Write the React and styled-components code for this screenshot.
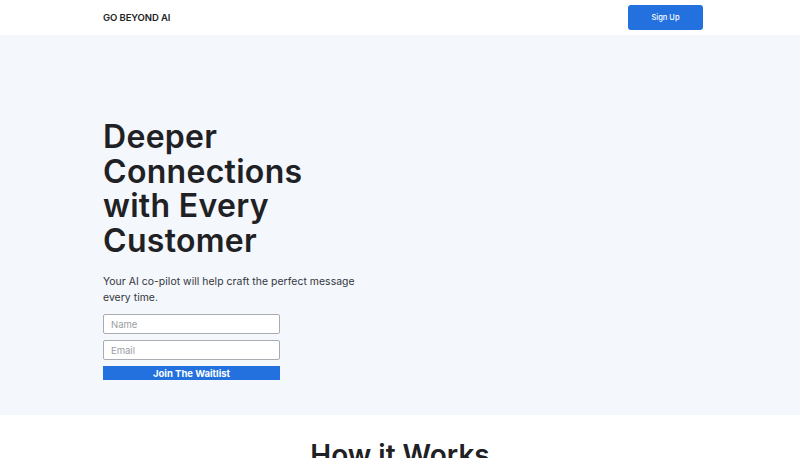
import React from 'react';
import styled, { createGlobalStyle } from 'styled-components';

const GlobalStyle = createGlobalStyle`
  * { box-sizing: border-box; }
  body {
    margin: 0;
    font-family: Inter, "Noto Sans", sans-serif;
    color: #1f2023;
    background: #fff;
  }
`;

const Container = styled.div`
  width: 600px;
  margin-left: calc(50% - 297px);
`;

const Header = styled.header`
  height: 35px;
  background: #fff;
`;

const HeaderInner = styled(Container)`
  height: 100%;
  display: flex;
  align-items: center;
  justify-content: space-between;
`;

const Logo = styled.div`
  font-size: 9.5px;
  font-weight: 600;
  letter-spacing: -0.1px;
  color: #222;
`;

const SignUp = styled.button`
  width: 75px;
  height: 25px;
  margin-bottom: 1px;
  border: none;
  border-radius: 3px;
  background: #2271de;
  color: #fff;
  font-family: inherit;
  font-size: 7.5px;
  font-weight: 500;
  cursor: pointer;
`;

const Hero = styled.section`
  height: 380px;
  background: #f4f7fc;
  padding-top: 85px;
`;

const Title = styled.h1`
  margin: 0;
  font-size: 32px;
  line-height: 34.5px;
  font-weight: 600;
  letter-spacing: 0.3px;
  color: #1f2124;
`;

const Lead = styled.p`
  margin: 16px 0 0;
  width: 258px;
  font-size: 10.4px;
  line-height: 15.5px;
  letter-spacing: 0.05px;
  color: #33363b;
`;

const Form = styled.form`
  margin-top: 9px;
  width: 177px;
  display: flex;
  flex-direction: column;
  gap: 6px;
`;

const Input = styled.input`
  height: 20px;
  border: 1px solid #a9acb0;
  border-radius: 2px;
  background: #fff;
  padding: 0 7px;
  font-family: inherit;
  font-size: 9.5px;
  &::placeholder { color: #9a9da2; }
`;

const Submit = styled.button`
  height: 14px;
  border: none;
  background: #2271de;
  color: #fff;
  font-family: inherit;
  font-size: 9.5px;
  font-weight: 700;
  padding: 0;
  cursor: pointer;
`;

const Section = styled.section`
  padding-top: 23px;
  text-align: center;
`;

const SectionTitle = styled.h2`
  margin: 0;
  font-size: 28px;
  font-weight: 600;
  color: #1f2124;
`;

export default function App() {
  return (
    <>
      <GlobalStyle />
      <Header>
        <HeaderInner>
          <Logo>GO BEYOND AI</Logo>
          <SignUp>Sign Up</SignUp>
        </HeaderInner>
      </Header>
      <Hero>
        <Container>
          <Title>
            Deeper<br />Connections<br />with Every<br />Customer
          </Title>
          <Lead>Your AI co-pilot will help craft the perfect message every time.</Lead>
          <Form onSubmit={(e) => e.preventDefault()}>
            <Input placeholder="Name" />
            <Input placeholder="Email" />
            <Submit type="submit">Join The Waitlist</Submit>
          </Form>
        </Container>
      </Hero>
      <Section>
        <SectionTitle>How it Works</SectionTitle>
      </Section>
    </>
  );
}
